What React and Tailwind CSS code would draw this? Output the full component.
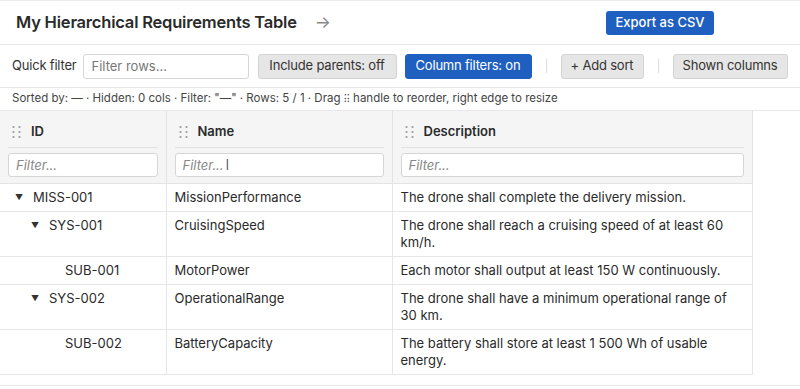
import React from "react";

const Grip = () => (
  <svg width="9" height="14" viewBox="0 0 9 14" className="shrink-0 text-[#9a9a9a]" fill="currentColor">
    <circle cx="1.5" cy="2" r="1.1" />
    <circle cx="1.5" cy="7" r="1.1" />
    <circle cx="1.5" cy="12" r="1.1" />
    <circle cx="7.5" cy="2" r="1.1" />
    <circle cx="7.5" cy="7" r="1.1" />
    <circle cx="7.5" cy="12" r="1.1" />
  </svg>
);

const rows = [
  { id: "MISS-001", level: 0, caret: true, name: "MissionPerformance", desc: "The drone shall complete the delivery mission." },
  { id: "SYS-001", level: 1, caret: true, name: "CruisingSpeed", desc: "The drone shall reach a cruising speed of at least 60 km/h." },
  { id: "SUB-001", level: 2, caret: false, name: "MotorPower", desc: "Each motor shall output at least 150 W continuously." },
  { id: "SYS-002", level: 1, caret: true, name: "OperationalRange", desc: "The drone shall have a minimum operational range of 30 km." },
  { id: "SUB-002", level: 2, caret: false, name: "BatteryCapacity", desc: "The battery shall store at least 1 500 Wh of usable energy." },
];

const pad = ["pl-[15px]", "pl-[31px]", "pl-[47px]"];

const btnGray = "shrink-0 whitespace-nowrap h-[25px] bg-[#e6e6e6] border border-[#d3d3d3] rounded-[3px] text-[#333] text-[13px] tracking-[-0.2px]";

export default function App() {
  return (
    <div className="w-[800px] h-[389px] overflow-hidden bg-white text-[#222] border-t border-[#ececec]" style={{ fontFamily: "Inter, 'Noto Sans', sans-serif" }}>
      <div className="flex items-center h-[44px] pl-4 pr-[86px] border-b border-[#e8e8e8]">
        <h1 className="text-[16.5px] font-semibold tracking-[-0.2px] text-[#2a2a2a] whitespace-nowrap">My Hierarchical Requirements Table</h1>
        <span className="ml-[18px] text-[#8a8a8a] text-[17px]">→</span>
        <button className="ml-auto shrink-0 whitespace-nowrap h-[24px] w-[108px] rounded-[3px] bg-[#1f5fbf] text-white text-[13px] font-medium">Export as CSV</button>
      </div>
      <div className="flex items-center h-[43px] pl-3 border-b border-[#e8e8e8] text-[13px] whitespace-nowrap">
        <span className="shrink-0 text-[#333] tracking-[-0.2px]">Quick filter</span>
        <input className="shrink-0 ml-[6px] h-[25px] w-[166px] border border-[#d6d6d6] rounded-[3px] px-2 text-[13px] placeholder-[#777] outline-none" placeholder="Filter rows..." />
        <button className={`${btnGray} ml-[9px] w-[139px]`}>Include parents: off</button>
        <button className="shrink-0 whitespace-nowrap ml-[8px] h-[25px] w-[127px] bg-[#1f5fbf] border border-[#1f5fbf] rounded-[3px] text-white text-[13px] tracking-[-0.2px]">Column filters: on</button>
        <span className="shrink-0 mx-[14px] w-px h-[14px] bg-[#dcdcdc]" />
        <button className={`${btnGray} w-[83px]`}>+ Add sort</button>
        <span className="shrink-0 mx-[14px] w-px h-[14px] bg-[#dcdcdc]" />
        <button className={`${btnGray} w-[115px]`}>Shown columns</button>
      </div>
      <div className="flex items-center h-[23px] pl-3 border-b border-[#e8e8e8] text-[11.5px] text-[#444] whitespace-nowrap">
        Sorted by: — · Hidden: 0 cols · Filter: "—" · Rows: 5 / 1 · Drag ⁝⁝ handle to reorder, right edge to resize
      </div>
      <div className="h-[275px] border-b border-[#e8e8e8]">
        <table className="w-[752px] table-fixed border-collapse text-[13px]">
          <colgroup>
            <col className="w-[166px]" />
            <col className="w-[226px]" />
            <col className="w-[360px]" />
          </colgroup>
          <thead>
            <tr className="bg-[#f5f5f5]">
              {["ID", "Name", "Description"].map((h) => (
                <th key={h} className="border-r border-b border-[#e3e3e3] px-2 pt-[12px] pb-[6px] text-left font-semibold align-top">
                  <div className="flex items-center gap-[10px] pl-1 h-[18px] text-[#2a2a2a]">
                    <Grip />
                    <span>{h}</span>
                  </div>
                  <div className="mt-[6px] border-t border-[#e3e3e3] pt-[5px]">
                    <div className="relative">
                      <input className="w-full h-[24px] bg-white border border-[#d6d6d6] rounded-[3px] px-[7px] text-[13px] italic font-normal placeholder-[#888] outline-none" placeholder="Filter..." />
                      {h === "Name" && (
                        <span className="absolute left-[51px] top-[2px] text-[#444] text-[14px] font-light leading-[20px]">I</span>
                      )}
                    </div>
                  </div>
                </th>
              ))}
            </tr>
          </thead>
          <tbody>
            {rows.map((r) => (
              <tr key={r.id}>
                <td className={`border-r border-b border-[#e6e6e6] py-[5px] pr-2 align-top leading-[17px] text-[#2a2a2a] ${pad[r.level]}`}>
                  <div className="flex items-start">
                    <span className="w-[18px] text-[8px] leading-[17px] text-[#333]">{r.caret ? "▼" : ""}</span>
                    <span>{r.id}</span>
                  </div>
                </td>
                <td className="border-r border-b border-[#e6e6e6] py-[5px] px-2 align-top leading-[17px] text-[#2a2a2a]">{r.name}</td>
                <td className="border-r border-b border-[#e6e6e6] py-[5px] px-2 align-top leading-[17px] text-[#2a2a2a]">{r.desc}</td>
              </tr>
            ))}
          </tbody>
        </table>
      </div>
    </div>
  );
}
